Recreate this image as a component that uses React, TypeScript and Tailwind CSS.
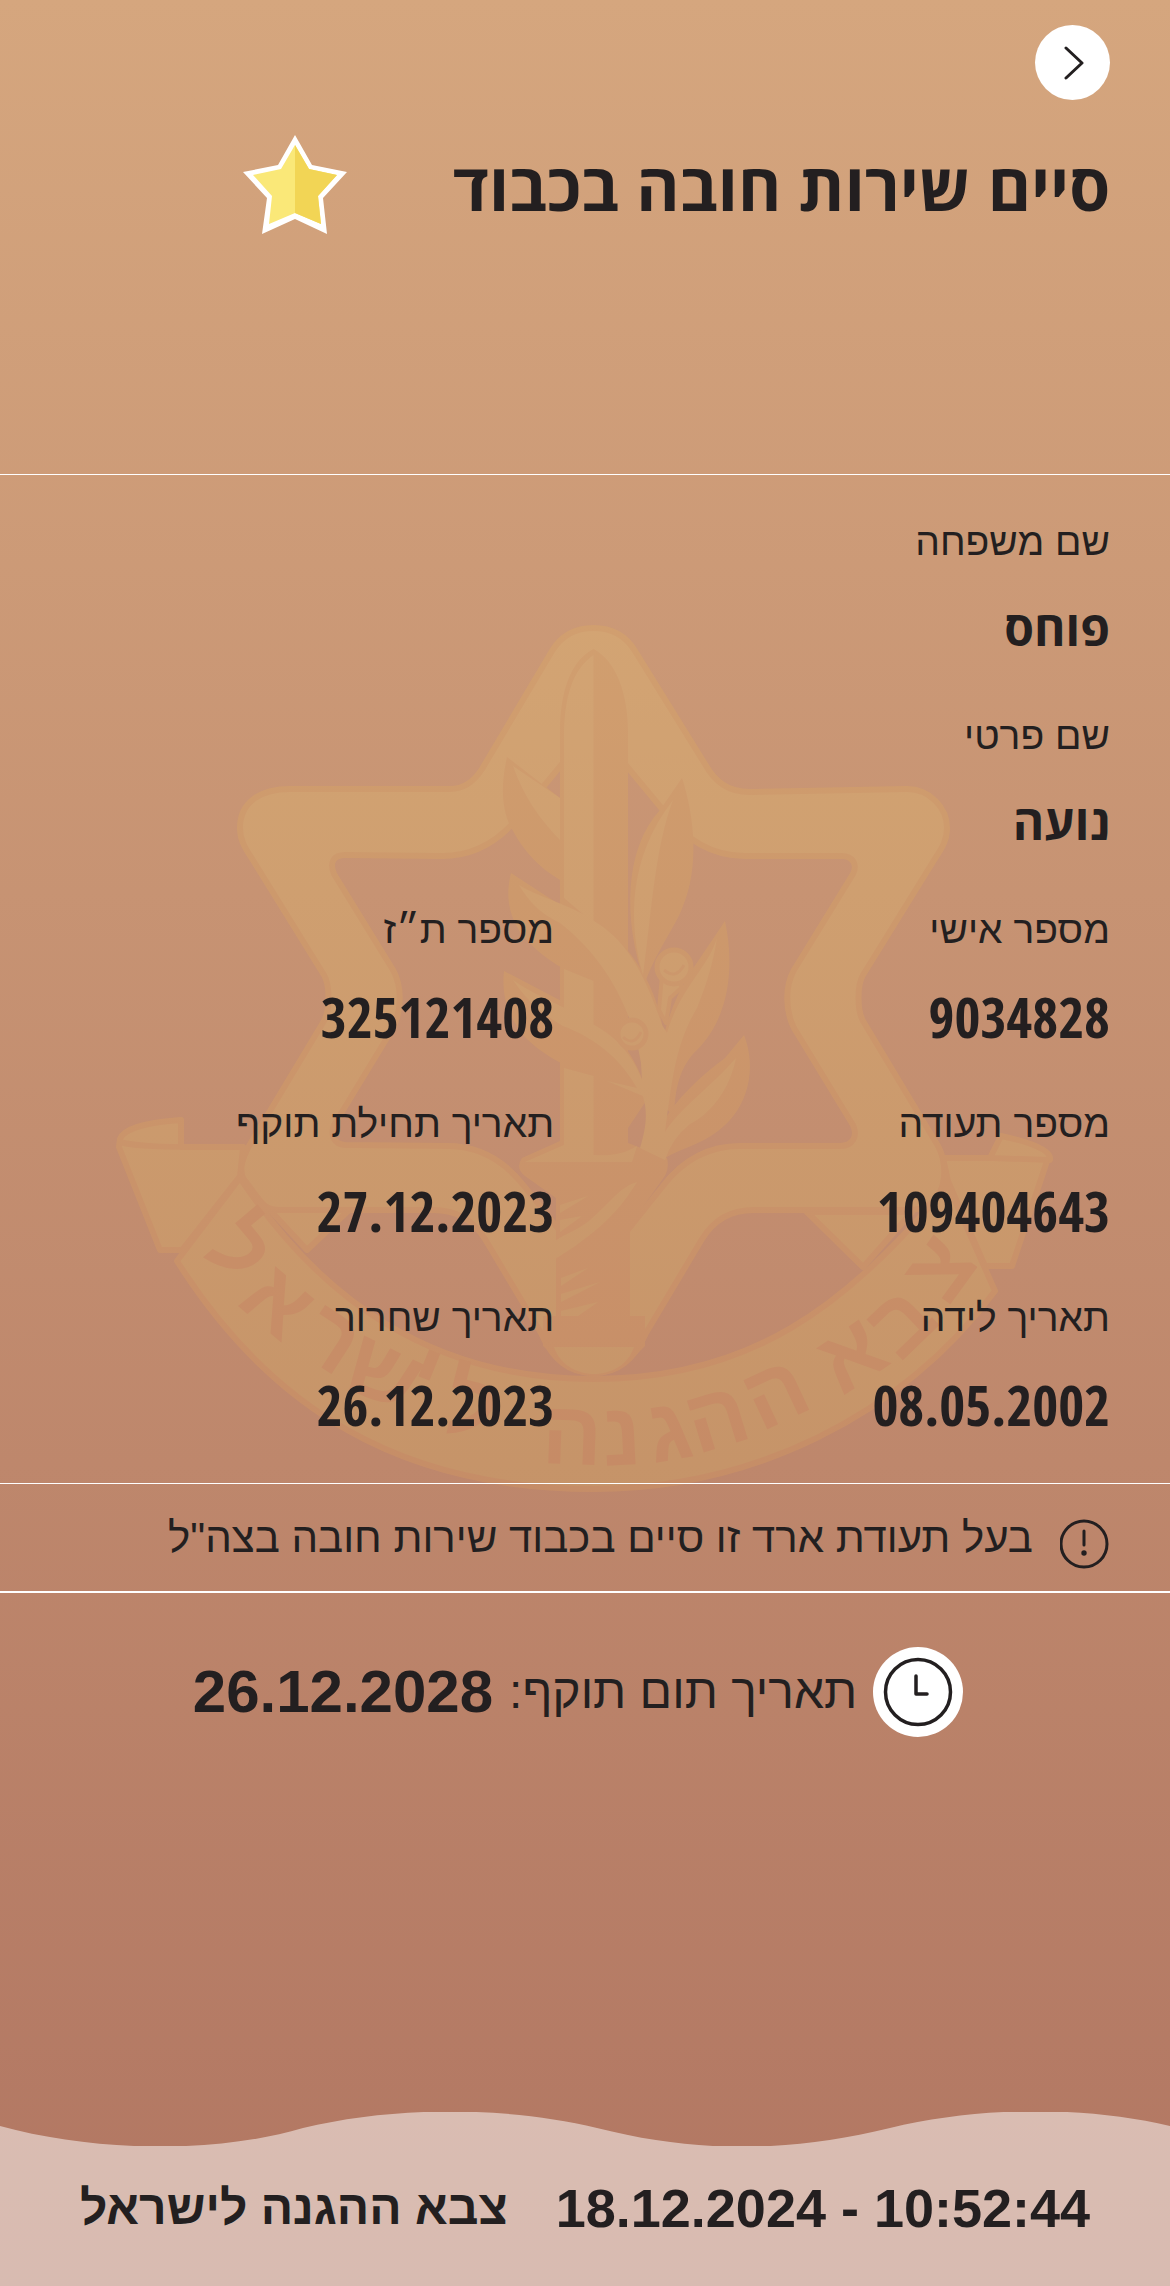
import type { ReactNode } from 'react';

const personal = [
  { label: 'שם משפחה', value: 'פוחס', wide: true },
  { label: 'שם פרטי', value: 'נועה', wide: true },
  { label: 'מספר אישי', value: '9034828' },
  { label: 'מספר ת״ז', value: '325121408' },
  { label: 'מספר תעודה', value: '109404643' },
  { label: 'תאריך תחילת תוקף', value: '27.12.2023' },
  { label: 'תאריך לידה', value: '08.05.2002' },
  { label: 'תאריך שחרור', value: '26.12.2023' },
];

const ribbonLetters: [string, number, number, number][] = [
  ['צ', 943, 1272, -54],
  ['ב', 903, 1326, -44],
  ['א', 853, 1360, -34],
  ['ה', 777, 1398, -25],
  ['ה', 718, 1423, -17],
  ['ג', 670, 1436, -10],
  ['נ', 622, 1441, -3],
  ['ה', 572, 1440, 2],
  ['ל', 470, 1412, 14],
  ['י', 424, 1380, 22],
  ['ש', 382, 1378, 26],
  ['ר', 330, 1344, 33],
  ['א', 276, 1306, 40],
  ['ל', 236, 1254, 50],
];

function Emblem() {
  return (
    <svg viewBox="100 610 970 900" className="w-[970px] max-w-full" aria-hidden="true">
      <defs>
        <linearGradient id="gold" gradientUnits="userSpaceOnUse" x1="0" y1="620" x2="0" y2="1500">
          <stop offset="0" stopColor="#dfb671" />
          <stop offset="1" stopColor="#d2a865" />
        </linearGradient>
        <linearGradient id="rim" gradientUnits="userSpaceOnUse" x1="0" y1="620" x2="0" y2="1500">
          <stop offset="0" stopColor="#daa865" />
          <stop offset="1" stopColor="#d39862" />
        </linearGradient>
      </defs>
      <g opacity="0.4" stroke="url(#rim)" strokeWidth="6" strokeLinejoin="round" fill="url(#gold)">
        <path d="M181 1122C150 1124 124 1130 120 1141L119 1149L160 1252H182L240 1178L243 1149H181Z" />
        <path d="M119 1144C140 1149 160 1149 243 1149" fill="none" />
        <path d="M943 1160H1048L1012 1268H985L948 1183Z" />
        <path d="M990 1160L1001 1138C1030 1144 1052 1152 1050 1162Z" />
        <path d="M270 1212H349L307 1252Z" />
        <path d="M807 1214H912L863 1269Z" />
        <path
          fillRule="evenodd"
          d="M593.500 630C612 630 626 638 635 653L705 766C715 784 728 794 750 794L907 791C930 791 947 810 947 830C947 842 942 850 936 859L863 977C857 987 857 1012 863 1023L938 1148C949 1168 949 1212 907 1212H753C732 1212 715 1220 702 1241L646 1335C634 1362 618 1375 593.500 1375C569 1375 553 1362 541 1335L485 1241C472 1220 455 1212 434 1212H280C265 1212 262 1205 255 1196L243 1180C239 1170 243 1160 249 1148L324 1023C330 1012 330 987 324 977L251 859C245 850 240 842 240 830C240 803 262 791 290 791H450C465 791 475 782 482 771L552 653C561 638 575 630 593.500 630Z
          M593.500 728L663 812C685 842 712 858 745 858H842C852 858 858 866 853 876L794 972C785 988 785 1012 794 1030L853 1127C858 1138 853 1148 840 1148H740C705 1148 680 1166 663 1188L593.500 1275L524 1188C507 1166 482 1148 447 1148L345 1147C334 1146 330 1138 334 1127L393 1030C402 1012 402 988 393 972L334 876C329 864 334 857 345 857L442 858C475 858 502 842 524 812Z"
        />
        <path d="M240 1180C320 1300 430 1381 593.500 1381C750 1381 845 1310 948 1187L995 1293C900 1420 750 1491 593.500 1491C400 1491 270 1410 177 1263Z" />
        <g stroke="none" fill="url(#rim)">
          <path d="M593.500 651C570 663 560 695 560 735V1143L522 1160Q515 1170 525 1178L556 1200V1318H543V1348L556 1360C575 1384 612 1384 633 1360L645 1348V1318H630V1227L662 1182Q670 1172 667 1160L628 1145V735C628 695 616 663 593.500 651Z" />
          <path d="M507 759C500 790 502 815 513 833C525 855 540 870 560 882V800Z" />
          <path d="M511 875C506 895 507 915 522 937C545 963 568 975 593 982C620 1000 640 1025 650 1060L664 1040C660 1000 640 955 598 925L560 907Z" />
          <path d="M504 973C501 1000 510 1020 523 1037C545 1060 570 1070 593 1078L628 1130L648 1100C640 1065 620 1035 590 1018Z" />
          <path d="M682 780C695 820 699 870 683 908C675 930 655 955 645 985C622 920 625 850 660 812Z" />
          <path d="M725 923C735 970 729 1020 697 1052C680 1068 675 1090 674 1118L655 1100C656 1055 668 1010 690 975Z" />
          <path d="M744 1037C757 1070 749 1110 718 1133C700 1147 682 1150 665 1160L660 1130C675 1100 705 1075 725 1060Z" />
        </g>
        <g stroke="none">
          <path d="M593.500 657C572 672 564 700 564 740V900L593.500 925ZM564 1010L593.500 1030V983L564 971ZM564 1070V1147L525 1164H632L637 1148C622 1157 610 1158 593.500 1157V1078Z" />
          <path d="M513 768L560 800V842C540 822 523 797 513 768Z" />
          <path d="M519 887C540 900 575 908 597 925C630 945 648 985 662 1027L667 1035C680 990 708 970 717 940C713 965 707 985 697 1010C676 1045 672 1080 665 1134C680 1110 710 1090 736 1060C730 1090 712 1115 690 1126Q672 1140 665 1162L640 1150C646 1130 648 1115 643 1098L607 1083L637 1090C620 1060 595 1040 563 1028C540 1015 525 1000 513 982C535 998 560 1005 590 1025C612 1035 632 1055 642 1082L641 1065C632 1010 605 960 560 925C540 915 530 905 519 887Z" />
          <path d="M673 802C655 850 652 910 643 977C628 925 628 860 673 802Z" />
          <path d="M560 1207L588 1198L560 1215ZM560 1222L582 1218L560 1234ZM637 1184C615 1220 590 1240 544 1268C543 1245 560 1240 575 1232C600 1220 615 1190 637 1184ZM561 1280L588 1270L561 1288ZM561 1296L600 1284L561 1304ZM561 1313L598 1304L578 1318H561Z" />
          <path d="M554 1349H634C622 1385 566 1385 554 1349Z" />
        </g>
        <path d="M659 1012L662 978H681V990L670 1000L666 1025Z" strokeWidth="4" />
        <circle cx="674" cy="969" r="17" strokeWidth="5" />
        <path d="M664 972Q676 982 684 967" fill="none" strokeWidth="3" />
        <circle cx="632" cy="1036" r="14" strokeWidth="5" />
        <path d="M623 1039Q634 1049 641 1034" fill="none" strokeWidth="3" />
        <g
          stroke="none"
          fill="#d3935f"
          fontFamily="Liberation Sans, sans-serif"
          fontWeight="700"
          fontSize="90"
          textAnchor="middle"
        >
          {ribbonLetters.map(([letter, x, y, angle], i) => (
            <text key={i} transform={`translate(${x} ${y}) rotate(${angle})`} y="26">
              {letter}
            </text>
          ))}
        </g>
      </g>
    </svg>
  );
}

function Star() {
  return (
    <svg width="104" height="99" viewBox="0 0 104 99" className="shrink-0" aria-hidden="true">
      <path d="M52 0L69 30L104 37L80 63L84 99L52 84L19 99L24 63L0 37L35 30Z" fill="#fff" />
      <path d="M52 10L66 34L94 40L75 61L78 89L52 78L26 89L29 61L10 40L38 34Z" fill="#fae878" />
      <path d="M52 10L66 34L94 40L75 61L78 89L52 78Z" fill="#f2d555" />
    </svg>
  );
}

function Field({ label, wide, children }: { label: string; wide?: boolean; children: ReactNode }) {
  return (
    <div className={wide ? 'col-span-2' : ''}>
      <dt className="text-[39px] leading-[60px]">{label}</dt>
      <dd
        className={
          wide
            ? "mt-[18px] font-['Open_Sans',sans-serif] text-[48px] leading-[76px] font-bold"
            : "mt-[18px] font-['Open_Sans_Condensed','Open_Sans',sans-serif] text-[56px] leading-[76px] font-bold"
        }
      >
        {children}
      </dd>
    </div>
  );
}

export default function App() {
  return (
    <main
      dir="rtl"
      className="isolate flex min-h-screen flex-col bg-linear-to-b from-[#d5a67e] to-[#b17662] font-['Liberation_Sans',Arial,sans-serif] text-[#231f20]"
    >
      <header className="border-b border-white px-[60px] pt-[25px] pb-[240px]">
        <button
          type="button"
          aria-label="חזרה"
          className="flex size-[75px] items-center justify-center rounded-full bg-white"
        >
          <svg width="34" height="34" viewBox="0 0 34 34" fill="none" stroke="#231f20" strokeWidth="3" strokeLinecap="round" strokeLinejoin="round">
            <path d="M10 2L26 17L10 32" />
          </svg>
        </button>
        <div className="mt-[35px] flex items-center gap-[106px]">
          <h1 className="font-['Open_Sans',sans-serif] text-[66px] leading-[96px] font-bold whitespace-nowrap">
            סיים שירות חובה בכבוד
          </h1>
          <Star />
        </div>
      </header>

      <section className="relative border-b border-white px-[60px] pt-[37px] pb-[41px]">
        <div className="absolute inset-x-0 top-[133px] -z-10 flex justify-center">
          <Emblem />
        </div>
        <dl className="grid grid-cols-[9fr_8fr] gap-y-10">
          {personal.map((item) => (
            <Field key={item.label} label={item.label} wide={item.wide}>
              {item.value}
            </Field>
          ))}
        </dl>
      </section>

      <section className="flex h-[109px] items-center gap-[27px] border-b-2 border-white px-[60px]">
        <svg width="50" height="50" viewBox="0 0 50 50" fill="none" stroke="#231f20" strokeWidth="3" strokeLinecap="round" className="mt-3" aria-hidden="true">
          <circle cx="24" cy="25" r="23" />
          <path d="M24 12V26" />
          <circle cx="24" cy="34" r="2.700" fill="#231f20" stroke="none" />
        </svg>
        <p className="text-[42px] leading-[60px]">בעל תעודת ארד זו סיים בכבוד שירות חובה בצה"ל</p>
      </section>

      <section className="flex items-center justify-center gap-4 pt-[54px] pr-3.5 pb-10">
        <svg width="90" height="90" viewBox="0 0 90 90" fill="none" stroke="#231f20" strokeWidth="3.500" aria-hidden="true">
          <circle cx="45" cy="45" r="45" fill="#fff" stroke="none" />
          <circle cx="45" cy="45" r="32.500" />
          <path d="M43 29V47H54" strokeLinecap="round" strokeLinejoin="round" />
        </svg>
        <p className="text-[48px] leading-[72px]">תאריך תום תוקף:</p>
        <p className="text-[60px] leading-[72px] font-bold">26.12.2028</p>
      </section>

      <footer className="mt-auto">
        <svg viewBox="0 0 1170 34" preserveAspectRatio="none" className="block h-[34px] w-full" aria-hidden="true">
          <path
            d="M0 14C95 40 215 42 303 16C395 -6 505 -6 597 16C700 42 790 40 890 16C980 -6 1085 -6 1170 14V34H0Z"
            fill="#fff"
            fillOpacity="0.5"
          />
        </svg>
        <div className="flex h-[140px] items-center justify-center gap-12 bg-white/50 pb-4 text-[48px] leading-[60px] font-bold">
          <time dir="ltr" className="text-[54px]">18.12.2024 - 10:52:44</time>
          <span>צבא ההגנה לישראל</span>
        </div>
      </footer>
    </main>
  );
}
